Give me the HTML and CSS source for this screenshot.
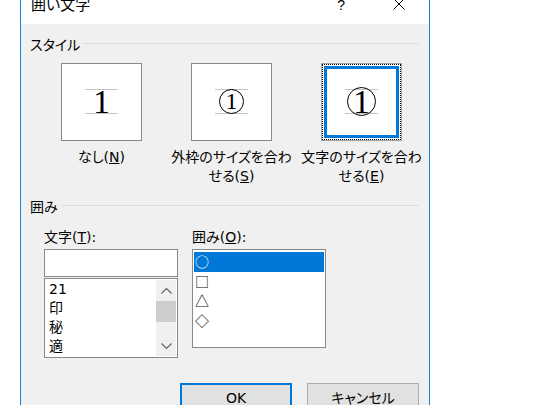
FILE: index.html
```html
<!DOCTYPE html>
<html lang="ja">
<head>
<meta charset="utf-8">
<title>囲い文字</title>
<link rel="stylesheet" href="styles.css">
</head>
<body>
<div class="dialog">
  <div class="titlebar">
    <span class="title">囲い文字</span>
    <span class="help">?</span>
    <svg class="close" width="12" height="12" viewBox="0 0 12 12"><path d="M0.5 0.5L11.5 11.5M11.5 0.5L0.5 11.5" stroke="#000" stroke-width="1" fill="none"/></svg>
  </div>
  <div class="content">
    <div class="group-head"><span class="group-label">スタイル</span><span class="rule"></span></div>
    <div class="styles">
      <div class="opt">
        <div class="box"><div class="guide"><span class="digit">1</span></div></div>
        <div class="opt-label">なし(<u>N</u>)</div>
      </div>
      <div class="opt">
        <div class="box"><div class="guide"><span class="circle small"><span class="digit sm">1</span></span></div></div>
        <div class="opt-label">外枠のサイズを合わ<br>せる(<u>S</u>)</div>
      </div>
      <div class="opt">
        <div class="box selected"><div class="focus"><div class="ring"><div class="guide"><span class="circle large"><span class="digit">1</span></span></div></div></div></div>
        <div class="opt-label">文字のサイズを合わ<br>せる(<u>E</u>)</div>
      </div>
    </div>
    <div class="group-head g2"><span class="group-label">囲み</span><span class="rule"></span></div>
    <div class="enclose">
      <div class="col">
        <div class="field-label">文字(<u>T</u>):</div>
        <div class="textbox"></div>
        <div class="list list-chars">
          <div class="rows">
            <div class="row">21</div>
            <div class="row">印</div>
            <div class="row">秘</div>
            <div class="row">適</div>
          </div>
          <div class="sb">
            <div class="sb-btn"><svg width="11" height="6" viewBox="0 0 11 6"><path d="M0.5 5.5L5.5 0.5L10.5 5.5" fill="none" stroke="#606060" stroke-width="1.1"/></svg></div>
            <div class="thumb"></div>
            <div class="sb-space"></div>
            <div class="sb-btn"><svg width="11" height="6" viewBox="0 0 11 6"><path d="M0.5 0.5L5.5 5.5L10.5 0.5" fill="none" stroke="#606060" stroke-width="1.1"/></svg></div>
          </div>
        </div>
      </div>
      <div class="col">
        <div class="field-label">囲み(<u>O</u>):</div>
        <div class="list list-shapes">
          <div class="row sel">○</div>
          <div class="row">□</div>
          <div class="row">△</div>
          <div class="row">◇</div>
        </div>
      </div>
    </div>
    <div class="buttons">
      <button class="btn btn-default">OK</button>
      <button class="btn">キャンセル</button>
    </div>
  </div>
</div>
</body>
</html>
```

FILE: styles.css
```css
* { box-sizing: border-box; }
html, body { margin: 0; padding: 0; }
body {
  width: 560px;
  height: 405px;
  overflow: hidden;
  background: #ffffff;
  font-family: "DejaVu Sans", "Noto Sans CJK JP", sans-serif;
  font-size: 14px;
  line-height: 16px;
  color: #000;
  font-feature-settings: "palt" 1;
}
.dialog {
  margin-left: 20px;
  width: 410px;
  height: 430px;
  border-left: 1px solid #1883d7;
  border-right: 1px solid #1883d7;
  background: #f0f0f0;
}
.titlebar {
  height: 24px;
  background: #fff;
  display: flex;
  align-items: flex-start;
  padding: 0 24px 0 10px;
}
.title {
  flex: 1;
  font-family: "Noto Sans CJK JP", sans-serif;
  font-size: 15px;
  line-height: 16px;
  margin-top: -4px;
}
.help {
  font-family: "Liberation Sans", sans-serif;
  font-size: 14px;
  line-height: 14px;
  margin-top: -2px;
  margin-right: 48px;
}
.close { display: block; margin-top: -2px; flex: none; }
.content { padding: 0 10px 0 9px; }
.group-head {
  display: flex;
  align-items: flex-start;
  height: 16px;
  margin-top: 13px;
}
.group-label { white-space: nowrap; }
.rule {
  flex: 1;
  height: 1px;
  background: #dcdcdc;
  margin-top: 6px;
  margin-left: 4px;
}
.styles {
  display: flex;
  gap: 49px;
  margin-top: 10px;
  padding-left: 31px;
}
.opt {
  width: 81px;
  display: flex;
  flex-direction: column;
  align-items: center;
}
.box {
  width: 81px;
  height: 78px;
  flex: none;
  border: 1px solid #8a8a8a;
  background: #fff;
  padding-bottom: 1px;
  display: flex;
  align-items: center;
  justify-content: center;
}
.box.selected {
  display: block;
  padding: 0;
  border-color: #a3a3a3;
}
.focus {
  height: 100%;
  border: 1px dotted #000;
  padding: 1px;
}
.ring {
  height: 100%;
  border: 3px solid #0078d7;
  padding-bottom: 1px;
  display: flex;
  align-items: center;
  justify-content: center;
}
.guide {
  flex: none;
  width: 33px;
  height: 25px;
  border-top: 1px solid #c4c4c4;
  border-bottom: 1px solid #c4c4c4;
  display: flex;
  align-items: center;
  justify-content: center;
}
.digit {
  font-family: "Liberation Serif", serif;
  font-size: 34px;
  line-height: 23px;
}
.digit.sm { font-size: 24px; }
.circle {
  flex: none;
  border: 1px solid #000;
  border-radius: 50%;
  display: flex;
  align-items: center;
  justify-content: center;
}
.circle.small { width: 25px; height: 25px; }
.circle.large { width: 29px; height: 29px; }
.opt-label {
  margin-top: 7px;
  line-height: 19px;
  white-space: nowrap;
  text-align: center;
}
.enclose {
  display: flex;
  gap: 14px;
  margin-top: 14px;
  padding-left: 14px;
}
.col { width: 134px; }
.field-label {
  height: 16px;
  margin-bottom: 4px;
  white-space: nowrap;
}
.textbox {
  height: 28px;
  border: 1px solid #8a8a8a;
  background: #fff;
}
.list {
  border: 1px solid #8a8a8a;
  background: #fff;
  padding: 1px;
}
.list-chars {
  margin-top: 1px;
  height: 80px;
  display: flex;
}
.rows { flex: 1; padding-left: 3px; }
.row {
  height: 19px;
  line-height: 19px;
  white-space: nowrap;
}
.sb {
  width: 20px;
  background: #f0f0f0;
  display: flex;
  flex-direction: column;
}
.sb-btn {
  height: 21px;
  display: flex;
  align-items: center;
  justify-content: center;
}
.sb-btn svg { display: block; }
.thumb { height: 21px; background: #cdcdcd; }
.sb-space { flex: 1; }
.list-shapes {
  height: 99px;
  padding: 2px 1px 1px 1px;
}
.list-shapes .row {
  height: 19.5px;
  line-height: 19.5px;
  font-family: "Noto Sans CJK JP", sans-serif;
  font-size: 14px;
  padding-left: 1px;
}
.row.sel { background: #0078d7; color: #fff; }
.buttons {
  display: flex;
  justify-content: flex-end;
  gap: 15px;
  margin-top: 25px;
}
.btn {
  width: 112px;
  height: 30px;
  padding: 0;
  background: #e1e1e1;
  border: 1px solid #adadad;
  border-radius: 0;
  color: #000;
  font-family: "DejaVu Sans", "Noto Sans CJK JP", sans-serif;
  font-size: 14px;
  line-height: 16px;
  font-feature-settings: "palt" 1;
}
.btn-default { border: 2px solid #0078d7; }
```
